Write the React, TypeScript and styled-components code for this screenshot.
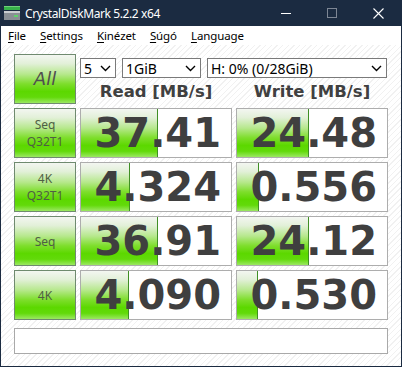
import React from "react";
import styled, { createGlobalStyle } from "styled-components";

const Global = createGlobalStyle`
  html, body { margin: 0; padding: 0; background: #1b2b41; overflow: hidden; }
  #root { width: 402px; height: 367px; }
`;

const Window = styled.div`
  width: 402px;
  height: 367px;
  box-sizing: border-box;
  padding: 0 1px 1px;
  background: #1b2b41;
  display: flex;
  flex-direction: column;
`;

const TitleBar = styled.div`
  height: 26px;
  display: flex;
  align-items: center;
  padding-left: 3px;
  color: #ffffff;
  font-family: "Noto Sans", "Open Sans", sans-serif;
  font-size: 12px;
  letter-spacing: -0.4px;
`;

const AppIcon = styled.svg`
  width: 16px;
  height: 16px;
  margin-right: 5px;
  flex: none;
`;

const TitleText = styled.span`
  flex: 1;
  white-space: nowrap;
`;

const CtrlButton = styled.div`
  width: 46px;
  height: 26px;
  display: flex;
  align-items: center;
  justify-content: center;
`;

const MenuBar = styled.div`
  height: 19px;
  background: #ffffff;
  display: flex;
  align-items: center;
  padding-left: 0px;
  font-family: "Noto Sans", "Open Sans", sans-serif;
  font-size: 11.5px;
  letter-spacing: -0.1px;
  color: #000;
`;

const MenuItem = styled.span`
  padding: 0 7px;
  white-space: nowrap;
  u { text-decoration-thickness: 1px; text-underline-offset: 2px; }
`;

const Client = styled.div`
  flex: 1;
  box-sizing: border-box;
  padding: 9px 13px 8px 13px;
  background-color: #ffffff;
  background-image: repeating-linear-gradient(
    135deg,
    #ffffff 0px,
    #ffffff 3px,
    #f1f1f1 3px,
    #f1f1f1 4px
  );
  display: grid;
  grid-template-columns: 62px 152px 152px;
  grid-template-rows: 50px 50px 50px 50px 50px 30px;
  column-gap: 4px;
  row-gap: 4px;
`;

const greenGradient = `linear-gradient(
  to bottom,
  #f3f6f1 0%,
  #e2f0d8 18%,
  #b6e88c 40%,
  #7ede2c 60%,
  #5cd800 76%,
  #62da0a 88%,
  #9be862 100%
)`;

const LabelButton = styled.div<{ $big?: boolean }>`
  box-sizing: border-box;
  border: 1px solid #6f8a6f;
  background: ${greenGradient};
  display: flex;
  flex-direction: column;
  align-items: center;
  justify-content: center;
  font-family: ${(p) => (p.$big ? '"DejaVu Sans", sans-serif' : '"Noto Sans", "Open Sans", sans-serif')};
  font-size: ${(p) => (p.$big ? "18px" : "12px")};
  font-style: ${(p) => (p.$big ? "italic" : "normal")};
  line-height: ${(p) => (p.$big ? "20px" : "17px")};
  color: ${(p) => (p.$big ? "#4f4f4f" : "#4f5f44")};
  text-align: center;
`;

const TopArea = styled.div`
  grid-column: 2 / span 2;
  display: flex;
  flex-direction: column;
  padding-top: 4px;
`;

const ComboRow = styled.div`
  display: flex;
  gap: 6px;
  height: 20px;
`;

const Combo = styled.div<{ $w: number }>`
  width: ${(p) => p.$w}px;
  height: 20px;
  box-sizing: border-box;
  border: 1px solid #7a7a7a;
  background: #ffffff;
  display: flex;
  align-items: center;
  padding: 0 4px 0 3px;
  font-family: "Noto Sans", "Open Sans", sans-serif;
  font-size: 14px;
  color: #000;
`;

const ComboText = styled.span`
  flex: 1;
  white-space: nowrap;
`;

const Chevron = styled.svg`
  width: 11px;
  height: 7px;
  flex: none;
`;

const HeaderRow = styled.div`
  display: grid;
  grid-template-columns: 152px 152px;
  column-gap: 4px;
  height: 26px;
  padding-top: 3px;
  box-sizing: border-box;
`;

const Header = styled.div`
  text-align: center;
  font-family: "DejaVu Sans", sans-serif;
  font-weight: bold;
  font-size: 16.5px;
  line-height: 22px;
  color: #404040;
  white-space: nowrap;
`;

const ValueBox = styled.div`
  position: relative;
  box-sizing: border-box;
  border: 1px solid #adadad;
  background: #ffffff;
  overflow: hidden;
  display: flex;
  align-items: center;
  justify-content: flex-end;
  padding-right: 10px;
`;

const Bar = styled.div`
  position: absolute;
  left: 0;
  top: 0;
  bottom: 0;
  background: ${greenGradient};
  border-right: 1px solid #3f8f24;
  box-sizing: border-box;
`;

const Value = styled.span`
  position: relative;
  font-family: "DejaVu Sans", sans-serif;
  font-weight: bold;
  font-size: 40px;
  line-height: 48px;
  color: #3f3f3f;
`;

const StatusBox = styled.div`
  grid-column: 1 / span 3;
  margin-top: 4px;
  box-sizing: border-box;
  border: 1px solid #a9a9a9;
  background: #ffffff;
`;

const rows = [
  { label: ["Seq", "Q32T1"], read: "37.41", rw: 77, write: "24.48", ww: 72 },
  { label: ["4K", "Q32T1"], read: "4.324", rw: 49, write: "0.556", ww: 22 },
  { label: ["Seq"], read: "36.91", rw: 77, write: "24.12", ww: 72 },
  { label: ["4K"], read: "4.090", rw: 48, write: "0.530", ww: 21 },
];

const ChevronIcon = () => (
  <Chevron viewBox="0 0 11 7">
    <path d="M1 1 L5.5 5.5 L10 1" fill="none" stroke="#000" strokeWidth="1.4" />
  </Chevron>
);

export default function App() {
  return (
    <>
      <Global />
      <Window>
        <TitleBar>
          <AppIcon viewBox="0 0 16 16">
            <rect x="0" y="1" width="16" height="4" fill="#37b24a" />
            <rect x="0" y="1" width="16" height="1" fill="#6fd27a" />
            <rect x="0" y="6" width="16" height="9" fill="#8a8f95" />
            <rect x="0" y="6" width="16" height="2" fill="#c9ccd0" />
            <rect x="10" y="10" width="4" height="2" fill="#5fd36a" />
          </AppIcon>
          <TitleText>CrystalDiskMark 5.2.2 x64</TitleText>
          <CtrlButton>
            <svg width="10" height="10" viewBox="0 0 10 10">
              <path d="M0 5.5 H10" stroke="#ffffff" strokeWidth="1" />
            </svg>
          </CtrlButton>
          <CtrlButton>
            <svg width="10" height="10" viewBox="0 0 10 10">
              <rect x="0.5" y="0.5" width="9" height="9" fill="none" stroke="#7d8694" strokeWidth="1" />
            </svg>
          </CtrlButton>
          <CtrlButton>
            <svg width="11" height="11" viewBox="0 0 11 11">
              <path d="M0.5 0.5 L10.5 10.5 M10.5 0.5 L0.5 10.5" stroke="#ffffff" strokeWidth="1.1" />
            </svg>
          </CtrlButton>
        </TitleBar>
        <MenuBar>
          <MenuItem><u>F</u>ile</MenuItem>
          <MenuItem><u>S</u>ettings</MenuItem>
          <MenuItem><u>K</u>inézet</MenuItem>
          <MenuItem><u>S</u>úgó</MenuItem>
          <MenuItem><u>L</u>anguage</MenuItem>
        </MenuBar>
        <Client>
          <LabelButton $big>All</LabelButton>
          <TopArea>
            <ComboRow>
              <Combo $w={36}><ComboText>5</ComboText><ChevronIcon /></Combo>
              <Combo $w={79}><ComboText>1GiB</ComboText><ChevronIcon /></Combo>
              <Combo $w={180}><ComboText>H: 0% (0/28GiB)</ComboText><ChevronIcon /></Combo>
            </ComboRow>
            <HeaderRow>
              <Header>Read [MB/s]</Header>
              <Header>Write [MB/s]</Header>
            </HeaderRow>
          </TopArea>
          {rows.map((r, i) => (
            <React.Fragment key={i}>
              <LabelButton>
                {r.label.map((l) => (
                  <span key={l}>{l}</span>
                ))}
              </LabelButton>
              <ValueBox>
                <Bar style={{ width: r.rw }} />
                <Value>{r.read}</Value>
              </ValueBox>
              <ValueBox>
                <Bar style={{ width: r.ww }} />
                <Value>{r.write}</Value>
              </ValueBox>
            </React.Fragment>
          ))}
          <StatusBox />
        </Client>
      </Window>
    </>
  );
}
